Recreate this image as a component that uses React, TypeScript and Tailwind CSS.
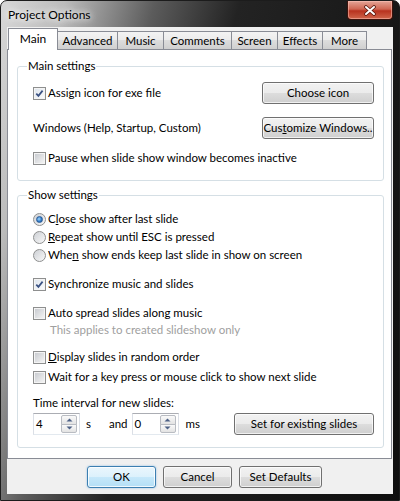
import { ReactNode } from 'react';

const tabs = [
  { label: 'Main', w: 'w-[50px]', active: true },
  { label: 'Advanced', w: 'w-[61px]' },
  { label: 'Music', w: 'w-[47px]' },
  { label: 'Comments', w: 'w-[69px]' },
  { label: 'Screen', w: 'w-[47px]' },
  { label: 'Effects', w: 'w-[46px]' },
  { label: 'More', w: 'w-[45px]' }
];

const Check = ({ checked }: { checked?: boolean }) => (
  <span className="relative flex h-[13px] w-[13px] shrink-0 items-center justify-center border border-[#8e8f8f] bg-[#f4f4f4]">
    <span
      className={`h-[9px] w-[9px] ${
        checked
          ? 'bg-[linear-gradient(135deg,#dfe6ee,#fbfbfb)]'
          : 'bg-[linear-gradient(135deg,#c9ccd1,#f3f3f3)]'
      }`}
    />
    {checked && (
      <svg className="absolute left-0 top-0" width="11" height="11" viewBox="0 0 11 11">
        <path d="M2.3 5.6 L4.4 7.9 L8.6 2.6" fill="none" stroke="#3b5283" strokeWidth="1.7" />
      </svg>
    )}
  </span>
);

const Radio = ({ checked }: { checked?: boolean }) => (
  <span className="flex h-[13px] w-[13px] shrink-0 items-center justify-center rounded-full border border-[#8e8f8f] bg-[linear-gradient(135deg,#cdd0d5,#f8f8f8)]">
    {checked && (
      <span className="h-[7px] w-[7px] rounded-full border border-[#2a5a96] bg-[radial-gradient(circle_at_40%_40%,#9fd7ff,#2e78c4_60%,#1b4f8f)]" />
    )}
  </span>
);

const CheckRow = ({ checked, children }: { checked?: boolean; children: ReactNode }) => (
  <div className="flex h-[16px] items-center gap-[2px]">
    <Check checked={checked} />
    <span className="whitespace-nowrap">{children}</span>
  </div>
);

const RadioRow = ({ checked, children }: { checked?: boolean; children: ReactNode }) => (
  <div className="flex h-[16px] items-center gap-[2px]">
    <Radio checked={checked} />
    <span className="whitespace-nowrap">{children}</span>
  </div>
);

const Btn = ({ children, className, isDefault }: { children: ReactNode; className: string; isDefault?: boolean }) => (
  <div
    className={`flex h-[22px] shrink-0 items-center justify-center whitespace-nowrap rounded-[3px] border ${className} ${
      isDefault
        ? 'border-[#3c7fb1] bg-[linear-gradient(#eaf6fd,#dcf1fc_50%,#c6e8fa_50%,#b4dff6)] shadow-[inset_0_0_0_1px_rgba(255,255,255,0.8),0_0_2px_rgba(60,150,220,0.6)]'
        : 'border-[#707070] bg-[linear-gradient(#f2f2f2,#ebebeb_50%,#dddddd_50%,#cfcfcf)] shadow-[inset_0_0_0_1px_rgba(255,255,255,0.7)]'
    }`}
  >
    {children}
  </div>
);

const Spin = ({ value }: { value: string }) => (
  <div className="flex h-[22px] w-[47px] shrink-0 border border-[#abadb3] border-x-[#dbdfe6] border-b-[#e3e9ef] bg-white">
    <span className="flex-1 pl-[2px] leading-[20px]">{value}</span>
    <div className="my-[1px] mr-[2px] flex w-[16px] flex-col">
      <span className="flex flex-1 items-center justify-center rounded-t-[2px] border border-[#b9bcc2] bg-[linear-gradient(#fafafa,#e3e3e3)]">
        <svg width="7" height="4" viewBox="0 0 7 4">
          <path d="M0.5 3.5 L3.5 0.5 L6.5 3.5 Z" fill="#4d6185" />
        </svg>
      </span>
      <span className="-mt-px flex flex-1 items-center justify-center rounded-b-[2px] border border-[#b9bcc2] bg-[linear-gradient(#fafafa,#e3e3e3)]">
        <svg width="7" height="4" viewBox="0 0 7 4">
          <path d="M0.5 0.5 L3.5 3.5 L6.5 0.5 Z" fill="#4d6185" />
        </svg>
      </span>
    </div>
  </div>
);

const Group = ({ title, className, children }: { title: string; className: string; children: ReactNode }) => (
  <div className={`relative ml-[9px] mr-[7px] rounded-[3px] border border-[#d5dfe5] pl-[15px] pr-[9px] ${className}`}>
    <span className="absolute -top-[9px] left-[9px] bg-white px-[1px] leading-[16px]">{title}</span>
    {children}
  </div>
);

const App = () => (
  <div className="flex h-[501px] w-[400px] flex-col overflow-hidden rounded-t-[7px] border border-[#1c1c1c] bg-[linear-gradient(105deg,#d8d8d8_0%,#bcbcbc_12%,#5c5c5c_29%,#232323_45%,#0e0e0e_100%)] font-['Lato','Liberation_Sans',sans-serif] text-[11.5px] leading-[16px] text-black">
    <div className="flex h-[26px] shrink-0 items-start justify-between">
      <span className="pl-[7px] pt-[6px] text-[12px] [text-shadow:0_0_6px_#fff,0_0_10px_#fff]">Project Options</span>
      <div className="mr-[6px] flex h-[19px] w-[46px] items-center justify-center rounded-b-[4px] border border-t-0 border-[#3b130c] bg-[linear-gradient(#e4a597,#cf6652_45%,#b8321f_55%,#d0664b)] shadow-[inset_0_0_0_1px_rgba(255,200,190,0.5)]">
        <svg width="14" height="11" viewBox="0 0 14 11">
          <path d="M3 2 L11 9 M11 2 L3 9" stroke="#5a1a10" strokeWidth="3.6" strokeLinecap="round" />
          <path d="M3 2 L11 9 M11 2 L3 9" stroke="#ffffff" strokeWidth="2" strokeLinecap="round" />
        </svg>
      </div>
    </div>

    <div className="mx-[6px] mb-[6px] flex flex-1 flex-col bg-[#f0f0f0] pt-[1px]">
      <div className="ml-[1px] flex h-[21px] items-end">
        {tabs.map((t, i) =>
          t.active ? (
            <div
              key={t.label}
              className={`relative z-10 -mb-px flex h-[22px] ${t.w} items-center justify-center border border-b-0 border-[#898c95] bg-white pb-[2px] text-[12px]`}
            >
              {t.label}
            </div>
          ) : (
            <div
              key={t.label}
              className={`flex h-[18px] ${t.w} ${i > 0 ? '-ml-px' : ''} items-center justify-center border border-b-0 border-[#898c95] bg-[linear-gradient(#f3f3f3,#ebebeb_50%,#dddddd_50%,#cfcfcf)] pt-px`}
            >
              {t.label}
            </div>
          )
        )}
      </div>

      <div className="mr-[1px] flex h-[410px] flex-col border border-[#898c95] bg-white">
        <Group title="Main settings" className="mt-[16px] pb-[14px] pt-[15px]">
          <div className="flex h-[22px] items-center justify-between">
            <CheckRow checked>Assign icon for exe file</CheckRow>
            <Btn className="w-[112px]">Choose icon</Btn>
          </div>
          <div className="mt-[13px] flex h-[22px] items-center justify-between">
            <span>Windows (Help, Startup, Custom)</span>
            <Btn className="w-[112px]">
              <span>
                Cus<span className="underline">t</span>omize Windows..
              </span>
            </Btn>
          </div>
          <div className="mt-[11px]">
            <CheckRow>Pause when slide show window becomes inactive</CheckRow>
          </div>
        </Group>

        <Group title="Show settings" className="mt-[14px] pb-[12px] pt-[15px]">
          <div className="flex flex-col gap-[2px]">
            <RadioRow checked>
              C<span className="underline">l</span>ose show after last slide
            </RadioRow>
            <RadioRow>
              <span className="underline">R</span>epeat show until ESC is pressed
            </RadioRow>
            <RadioRow>
              Whe<span className="underline">n</span> show ends keep last slide in show on screen
            </RadioRow>
          </div>
          <div className="mt-[13px]">
            <CheckRow checked>Synchronize music and slides</CheckRow>
          </div>
          <div className="mt-[13px]">
            <CheckRow>Auto spread slides along music</CheckRow>
          </div>
          <div className="mt-[1px] pl-[17px] text-[#a0a0a0]">This applies to created slideshow only</div>
          <div className="mt-[11px]">
            <CheckRow>
              <span className="underline">D</span>isplay slides in random order
            </CheckRow>
          </div>
          <div className="mt-[4px]">
            <CheckRow>Wait for a key press or mouse click to show next slide</CheckRow>
          </div>
          <div className="mt-[10px]">Time interval for new slides:</div>
          <div className="mt-[2px] flex h-[22px] items-center">
            <Spin value="4" />
            <span className="ml-[6px]">s</span>
            <span className="ml-[18px]">and</span>
            <span className="ml-[4px]" />
            <Spin value="0" />
            <span className="ml-[7px]">ms</span>
            <span className="flex-1" />
            <Btn className="w-[140px]">Set for existing slides</Btn>
          </div>
        </Group>
      </div>

      <div className="flex flex-1 items-start gap-[7px] pl-[80px] pt-[7px]">
        <Btn className="w-[69px]" isDefault>
          OK
        </Btn>
        <Btn className="w-[69px]">Cancel</Btn>
        <Btn className="w-[83px]">Set Defaults</Btn>
      </div>
    </div>
  </div>
);

export default App;
